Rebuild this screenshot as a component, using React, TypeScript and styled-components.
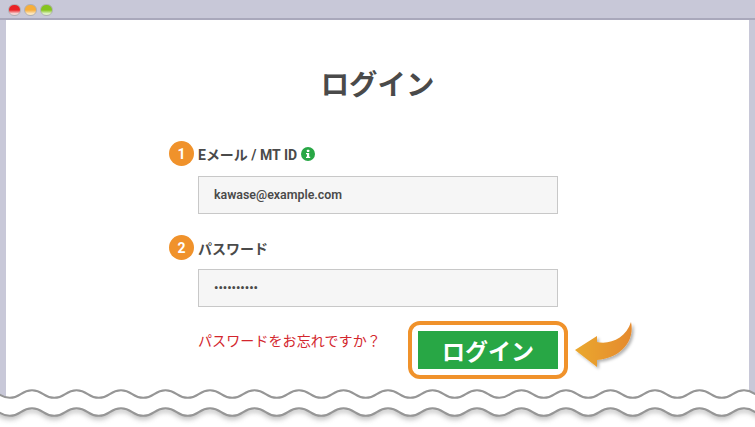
import React from 'react';
import styled, { createGlobalStyle } from 'styled-components';

const GlobalStyle = createGlobalStyle`
  html, body {
    margin: 0;
    padding: 0;
    background: #fff;
    font-family: 'Roboto', 'Noto Sans CJK JP', sans-serif;
  }
`;

const SWindow = styled.div`
  position: relative;
  width: 755px;
  height: 427px;
  overflow: hidden;
  box-sizing: border-box;
  padding: 0 6px;
  background: #c8c8d8;
`;

const STitleBar = styled.div`
  display: flex;
  align-items: center;
  gap: 3.5px;
  height: 20px;
  margin: 0 -6px;
  padding: 2px 0 0 8px;
  box-sizing: border-box;
  border-bottom: 2px solid #a9a8bb;
`;

const SLight = styled.span<{ $top: string; $bottom: string }>`
  width: 12.5px;
  height: 12.5px;
  border-radius: 50%;
  border: 1px solid #b0b0b4;
  box-sizing: border-box;
  background: linear-gradient(${(p) => p.$top} 0 50%, ${(p) => p.$bottom} 85%);
`;

const SContent = styled.div`
  height: 407px;
  background: #fff;
  display: flex;
  flex-direction: column;
`;

const STitle = styled.h1`
  margin: 44px 0 39px;
  text-align: center;
  font-family: 'Noto Sans CJK JP', sans-serif;
  font-size: 28.4px;
  line-height: 38px;
  font-weight: 700;
  color: #4a4a4a;
`;

const SForm = styled.form`
  width: 399px;
  margin-left: 163px;
  display: flex;
  flex-direction: column;
`;

const SLabelRow = styled.div`
  display: flex;
  align-items: center;
  height: 25px;
  gap: 4px;
  font-family: 'Roboto', 'Noto Sans CJK JP', sans-serif;
  font-size: 14px;
  font-weight: 700;
  color: #4a4a4a;
`;

const SStep = styled.span`
  width: 25px;
  height: 25px;
  border-radius: 50%;
  background: #f0922b;
  color: #fff;
  font-size: 14px;
  font-weight: 700;
  display: flex;
  align-items: center;
  justify-content: center;
`;

const SField = styled.input<{ $top: number }>`
  display: block;
  width: 360px;
  height: 38px;
  margin: ${(p) => p.$top}px 0 21px 29px;
  box-sizing: border-box;
  padding: 0 15px 2px;
  background: #f6f6f6;
  border: 1px solid #c8c8c8;
  font-family: 'Roboto', sans-serif;
  font-size: 12.4px;
  font-weight: 600;
  color: #4a4a4a;
  outline: none;
`;

const SActions = styled.div`
  display: flex;
  align-items: flex-start;
  margin-top: -7px;
  padding-left: 29px;
  height: 58px;
`;

const SForgot = styled.a`
  flex: 0 0 210px;
  margin-top: 8px;
  font-family: 'Noto Sans CJK JP', sans-serif;
  font-size: 14px;
  line-height: 22px;
  color: #d3262d;
  letter-spacing: 0.1px;
`;

const SButtonRing = styled.div`
  flex: 0 0 160px;
  height: 58px;
  box-sizing: border-box;
  border: 4px solid #f0922b;
  border-radius: 12px;
  background: #fff;
  display: flex;
  align-items: center;
  justify-content: center;
`;

const SLoginButton = styled.button`
  width: 140px;
  height: 38px;
  padding: 0;
  border: 0;
  background: #28a745;
  color: #fff;
  font-family: 'Noto Sans CJK JP', sans-serif;
  font-size: 23px;
  font-weight: 700;
  line-height: 38px;
`;

const SArrow = styled.svg`
  position: absolute;
  left: 570px;
  top: 316px;
`;

const STear = styled.svg`
  position: absolute;
  left: 0;
  top: 380px;
`;

// scalloped torn edge, period ~44.5px
const wavePath = (y: number) => {
  let d = `M-34.75 ${y + 7.5}`;
  for (let x = -34.75; x < 770; x += 44.5) {
    d += ` C${x + 11} ${y + 7.5} ${x + 11} ${y} ${x + 22.25} ${y} S${x + 33.5} ${y + 7.5} ${x + 44.5} ${y + 7.5}`;
  }
  return d;
};

function Tear() {
  const top = wavePath(10.3);
  const bottom = wavePath(28.3);
  return (
    <STear width="755" height="47" viewBox="0 0 755 47">
      <defs>
        <filter id="tearShadow" x="-2%" y="-50%" width="104%" height="250%">
          <feGaussianBlur stdDeviation="2.5" />
        </filter>
      </defs>
      <path d={`${top} L770 47 L-40 47 Z`} fill="#fff" />
      <path d={`${bottom} L770 24 L-40 24 Z`} transform="translate(0 4)" fill="#888" opacity="0.5" filter="url(#tearShadow)" />
      <path d={`${bottom} L770 20 L-40 20 Z`} fill="#fff" />
      <path d={top} fill="none" stroke="#969696" strokeWidth="2" />
      <path d={bottom} fill="none" stroke="#969696" strokeWidth="2" />
    </STear>
  );
}

export default function App() {
  return (
    <>
      <GlobalStyle />
      <SWindow>
        <STitleBar>
          <SLight $top="#ea2226" $bottom="#f5d0d0" />
          <SLight $top="#f7ae3a" $bottom="#fbe4bc" />
          <SLight $top="#86c41e" $bottom="#dcefc0" />
        </STitleBar>
        <SContent>
          <STitle>ログイン</STitle>
          <SForm>
            <SLabelRow>
              <SStep>1</SStep>
              Eメール / MT ID
              <svg width="14" height="14" viewBox="0 0 14 14">
                <circle cx="7" cy="7" r="7" fill="#28a745" />
                <rect x="5.9" y="2.8" width="2.4" height="2.2" rx="0.5" fill="#fff" />
                <path d="M5 6h3.2v3.7H9.2V11H5V9.7h1V7.3H5z" fill="#fff" />
              </svg>
            </SLabelRow>
            <SField $top={10} readOnly value="kawase@example.com" />
            <SLabelRow>
              <SStep>2</SStep>
              パスワード
            </SLabelRow>
            <SField $top={9} readOnly type="password" value="••••••••••" />
            <SActions>
              <SForgot>パスワードをお忘れですか？</SForgot>
              <SButtonRing>
                <SLoginButton type="button">ログイン</SLoginButton>
              </SButtonRing>
            </SActions>
          </SForm>
        </SContent>
        <SArrow width="72" height="60" viewBox="0 0 72 60">
          <defs>
            <linearGradient id="arrowFill" x1="0" x2="1" y1="0" y2="0">
              <stop offset="0" stopColor="#eaa82f" />
              <stop offset="1" stopColor="#e58a2e" />
            </linearGradient>
            <filter id="arrowShadow" x="-20%" y="-20%" width="140%" height="140%">
              <feDropShadow dx="2" dy="2" stdDeviation="1.5" floodColor="#000" floodOpacity="0.3" />
            </filter>
          </defs>
          <path
            d="M5 34 L27 20 L27 26 C40 29 56 22 61 6 C65 24 52 42 27 44 L27 51 Z"
            fill="url(#arrowFill)"
            filter="url(#arrowShadow)"
          />
        </SArrow>
        <Tear />
      </SWindow>
    </>
  );
}
